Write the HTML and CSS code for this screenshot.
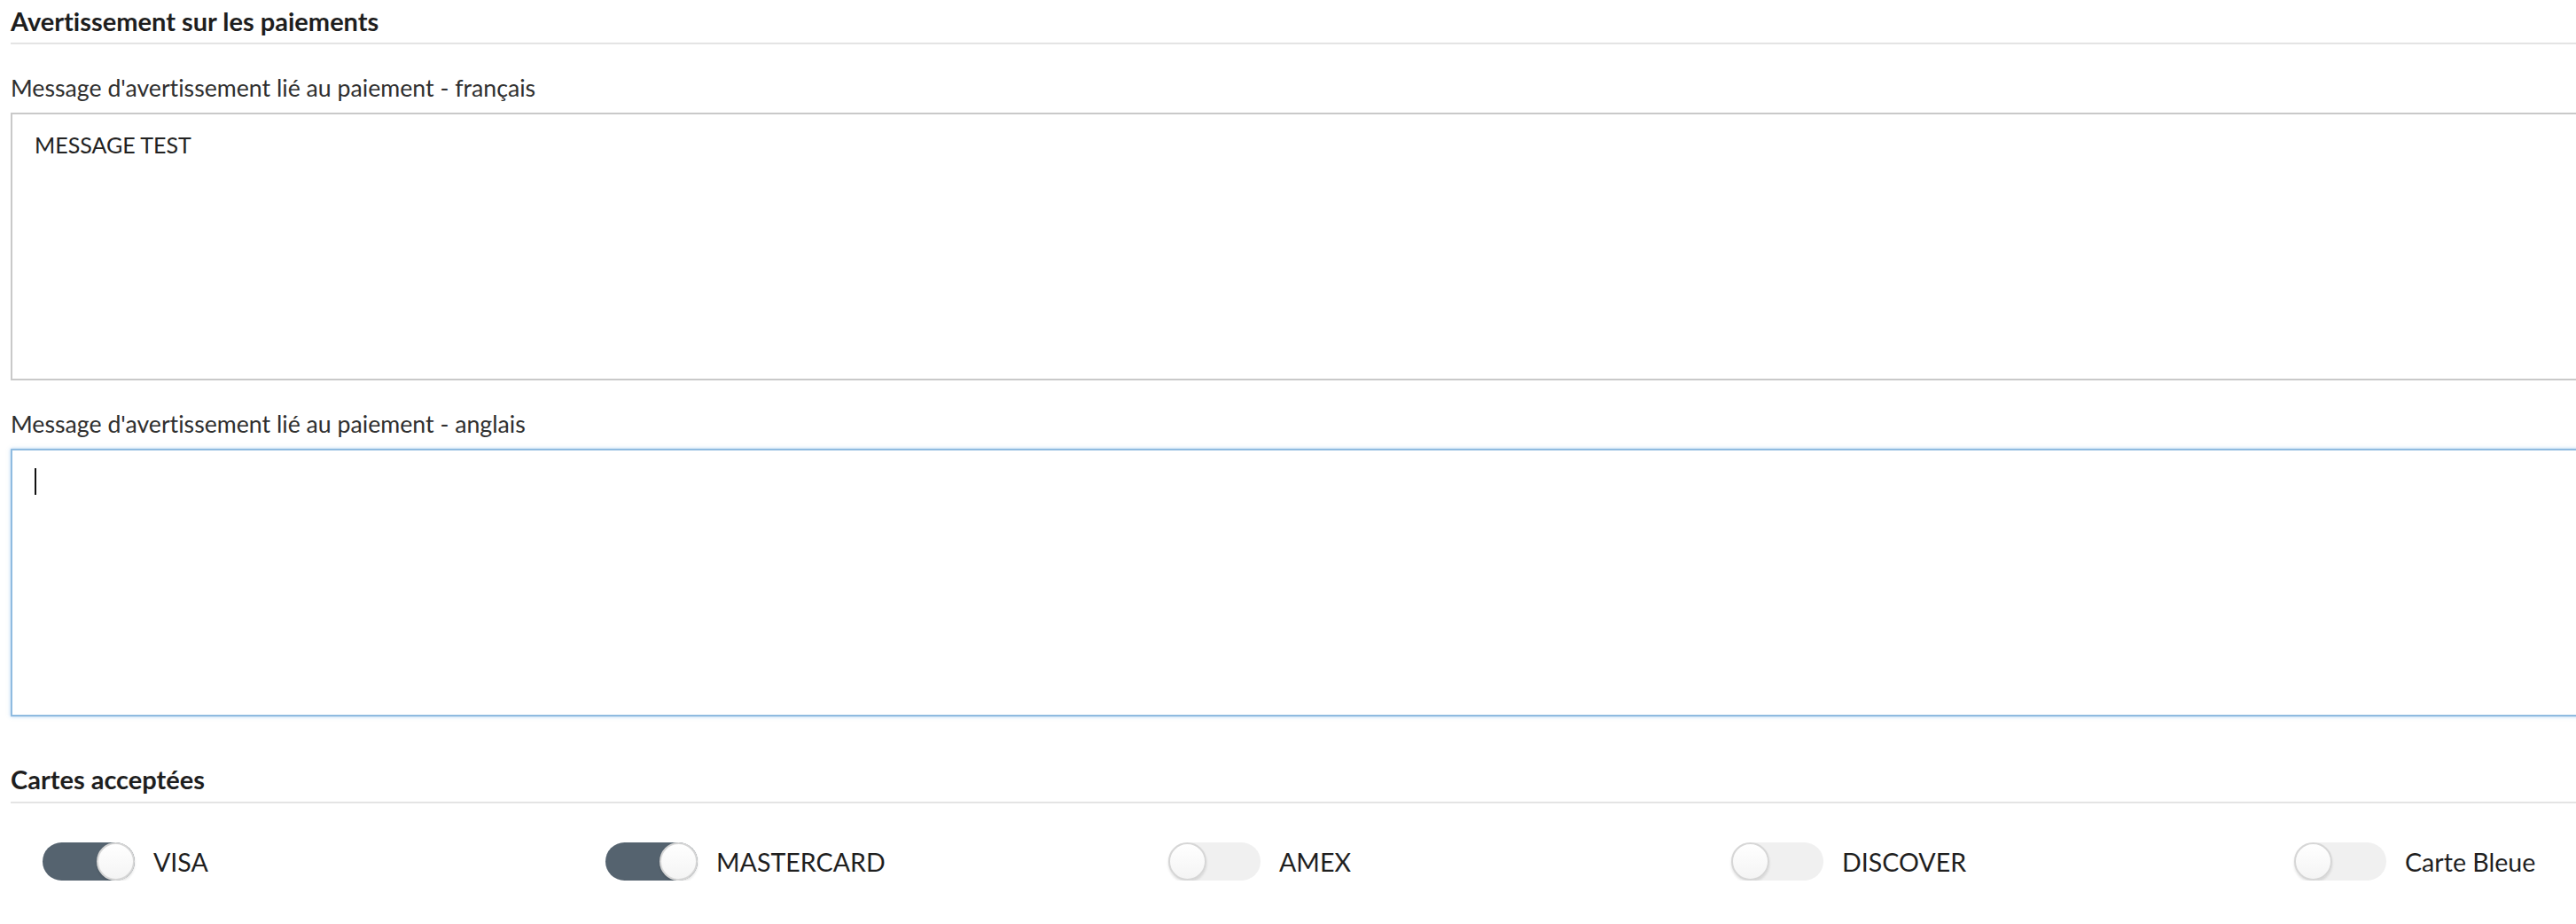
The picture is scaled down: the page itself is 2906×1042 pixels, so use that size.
FILE: index.html
```html
<!DOCTYPE html>
<html lang="fr">
<head>
<meta charset="utf-8">
<title>Avertissement sur les paiements</title>
<link rel="stylesheet" href="styles.css">
</head>
<body>
<div class="page">
  <section class="section">
    <h2 class="section-title">Avertissement sur les paiements</h2>
    <div class="field">
      <label class="field-label" for="msg-fr">Message d'avertissement lié au paiement - français</label>
      <textarea id="msg-fr" class="textarea">MESSAGE TEST</textarea>
    </div>
    <div class="field">
      <label class="field-label" for="msg-en">Message d'avertissement lié au paiement - anglais</label>
      <div class="textarea-wrap">
        <textarea id="msg-en" class="textarea is-focused"></textarea>
        <span class="caret"></span>
      </div>
    </div>
  </section>
  <section class="section section-cards">
    <h2 class="section-title">Cartes acceptées</h2>
    <div class="cards">
      <div class="card-option">
        <span class="switch is-on"><span class="knob"></span></span>
        <span class="card-name">VISA</span>
      </div>
      <div class="card-option">
        <span class="switch is-on"><span class="knob"></span></span>
        <span class="card-name">MASTERCARD</span>
      </div>
      <div class="card-option">
        <span class="switch"><span class="knob"></span></span>
        <span class="card-name">AMEX</span>
      </div>
      <div class="card-option">
        <span class="switch"><span class="knob"></span></span>
        <span class="card-name">DISCOVER</span>
      </div>
      <div class="card-option">
        <span class="switch"><span class="knob"></span></span>
        <span class="card-name">Carte Bleue</span>
      </div>
    </div>
  </section>
</div>
</body>
</html>
```

FILE: styles.css
```css
html, body {
  margin: 0;
  padding: 0;
  overflow: hidden;
  background: #ffffff;
}

body {
  font-family: Lato, "Open Sans", Arial, sans-serif;
  font-variant-ligatures: no-common-ligatures;
  color: #2b2b2b;
}

.page {
  width: 3175px;
  padding-left: 12px;
  padding-top: 4px;
}

.section-title {
  margin: 0;
  font-size: 29px;
  line-height: 40px;
  font-weight: 700;
  color: #1e1e1e;
  padding-bottom: 4px;
  border-bottom: 2px solid #e4e4e4;
}

.field {
  display: flex;
  flex-direction: column;
}

.field-label {
  margin-top: 31px;
  font-size: 26.7px;
  line-height: 36px;
  color: #2f2f2f;
}

.textarea-wrap {
  position: relative;
  margin-top: 10px;
}

.textarea {
  display: block;
  box-sizing: border-box;
  width: 100%;
  height: 302px;
  margin: 10px 0 0 0;
  padding: 16px 25px;
  border: 2px solid #c9c9c9;
  border-radius: 0;
  font-family: Lato, "Open Sans", Arial, sans-serif;
  font-variant-ligatures: no-common-ligatures;
  font-size: 25px;
  line-height: 36px;
  color: #222;
  resize: none;
  outline: none;
  background: #fff;
}

.textarea-wrap .textarea {
  margin-top: 0;
}

.textarea.is-focused {
  border-color: #8fbbe0;
  box-shadow: 0 0 4px rgba(102, 165, 225, 0.55);
}

.caret {
  position: absolute;
  left: 27px;
  top: 22px;
  width: 2px;
  height: 30px;
  background: #111;
}

.section-cards {
  margin-top: 51px;
}

.section-cards .section-title {
  padding-bottom: 5px;
}

.cards {
  display: grid;
  grid-template-columns: repeat(5, 635px);
  margin-top: 44px;
}

.card-option {
  display: flex;
  align-items: center;
  gap: 21px;
  padding-left: 36px;
}

.switch {
  position: relative;
  display: inline-flex;
  align-items: center;
  width: 104px;
  height: 43px;
  border-radius: 22px;
  background: #f0f0f0;
  flex: none;
}

.switch.is-on {
  background: #55636f;
  justify-content: flex-end;
}

.knob {
  box-sizing: border-box;
  width: 43px;
  height: 43px;
  border-radius: 50%;
  background: linear-gradient(180deg, #ffffff 0%, #f4f4f4 100%);
  border: 2px solid #d6d6d6;
  box-shadow: 0 2px 3px rgba(0, 0, 0, 0.12);
}

.card-name {
  font-size: 28.6px;
  line-height: 40px;
  color: #1f1f1f;
}
```
